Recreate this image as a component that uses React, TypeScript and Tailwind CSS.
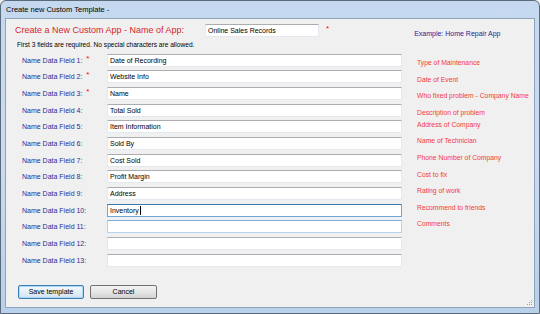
import React from 'react';

const fields = [
  'Date of Recording',
  'Website Info',
  'Name',
  'Total Sold',
  'Item Information',
  'Sold By',
  'Cost Sold',
  'Profit Margin',
  'Address',
  'Inventory',
  '',
  '',
  '',
];

const hints = [
  'Type of Maintenance',
  'Date of Event',
  'Who fixed problem - Company Name',
  'Description of problem',
  'Address of Company',
  'Name of Technician',
  'Phone Number of Company',
  'Cost to fix',
  'Rating of work',
  'Recommend to friends',
  'Comments',
];

const font = "font-['Liberation_Sans',Arial,sans-serif]";

const App: React.FC = () => {
  return (
    <div className={`w-[540px] h-[314px] bg-[#f0f0f0] ${font}`}>
      <div className="w-[540px] h-[314px] flex flex-col border border-[#5b6a7b] rounded-t-[6px] bg-gradient-to-b from-[#c4d8ef] via-[#c9dcf1] to-[#b9d0ea]">
        {/* title bar */}
        <div className="h-[17px] flex items-center pl-[5px] text-[7.5px] text-black leading-none">
          Create new Custom Template -
        </div>

        {/* client area */}
        <div className="relative mx-[4px] mb-[5px] flex-1 border border-[#8fa3ba] bg-[#f0f0f0] pt-[5px]">
          {/* header row */}
          <div className="flex items-start h-[13px]">
            <div className="ml-[9px] w-[190px] h-[13px] flex items-center text-[9px] leading-none text-[#d6252b]">
              Create a New Custom App - Name of App:
            </div>
            <div className="w-[114px] h-[13px] bg-white border border-[#e3e9ef] border-t-[#abadb3] flex items-center pl-[2px] text-[7px] leading-none text-black">
              Online Sales Records
            </div>
            <span className="ml-[7px] mt-[1px] text-[8px] leading-none text-[#ff0000]">*</span>
            <div className="ml-[85px] mt-[6px] text-[7px] leading-none text-[#1e1e96]">Example: Home Repair App</div>
          </div>

          {/* note */}
          <div className="mt-[4px] ml-[11px] h-[8px] text-[6.6px] leading-[8px] text-black">
            First 3 fields are required. No special characters are allowed.
          </div>

          {/* fields + hints */}
          <div className="mt-[3px] flex">
            <div className="flex flex-col">
              {fields.map((value, i) => {
                const focused = i === 9;
                const hover = i === 10;
                const border = focused
                  ? 'border-[#6fa6da] border-t-[#3d7bad]'
                  : hover
                    ? 'border-[#b6d3ee] border-t-[#7eaedb]'
                    : 'border-[#e3e9ef] border-t-[#abadb3]';
                return (
                  <div key={i} className="h-[16.67px] flex items-center">
                    <div className="w-[101px] pl-[16px] flex items-center text-[7px] leading-none text-[#2c2c98]">
                      <span>Name Data Field {i + 1}:</span>
                      {i < 3 && <span className="ml-[4px] -mt-[3px] text-[8px] text-[#ff0000]">*</span>}
                    </div>
                    <div className={`w-[295px] h-[13px] bg-white border ${border} flex items-center pl-[2px] text-[7px] leading-none text-black`}>
                      {value}
                      {focused && <span className="ml-[1px] w-px h-[9px] bg-black" />}
                    </div>
                  </div>
                );
              })}
            </div>

            <div className="ml-[15px] pt-[3px] flex flex-col">
              {hints.map((h, i) => (
                <div
                  key={h}
                  className={`h-[16.67px] flex items-center text-[6.8px] leading-none text-[#f23a40] whitespace-nowrap ${i === 4 ? '-mt-[5px]' : ''}`}
                >
                  {h}
                </div>
              ))}
            </div>
          </div>

          {/* buttons */}
          <div className="mt-[16px] ml-[12px] flex gap-[6px]">
            <button className="w-[66px] h-[14px] rounded-[2px] border border-[#3c7fb1] bg-gradient-to-b from-[#f3f8fc] via-[#e4eef8] to-[#cfe2f2] shadow-[inset_0_0_0_1px_#aad8f5] text-[7px] leading-none text-black">
              Save template
            </button>
            <button className="w-[67px] h-[14px] rounded-[2px] border border-[#707070] bg-gradient-to-b from-[#f2f2f2] via-[#e6e6e6] to-[#d2d2d2] text-[7px] leading-none text-black">
              Cancel
            </button>
          </div>

          {/* resize grip */}
          <svg className="absolute right-[1px] bottom-[1px]" width="8" height="8" viewBox="0 0 8 8">
            {[
              [6, 2],
              [4, 4],
              [6, 4],
              [2, 6],
              [4, 6],
              [6, 6],
            ].map(([x, y]) => (
              <rect key={`${x}-${y}`} x={x} y={y} width="1" height="1" fill="#a0a0a0" />
            ))}
          </svg>
        </div>
      </div>
    </div>
  );
};

export default App;
